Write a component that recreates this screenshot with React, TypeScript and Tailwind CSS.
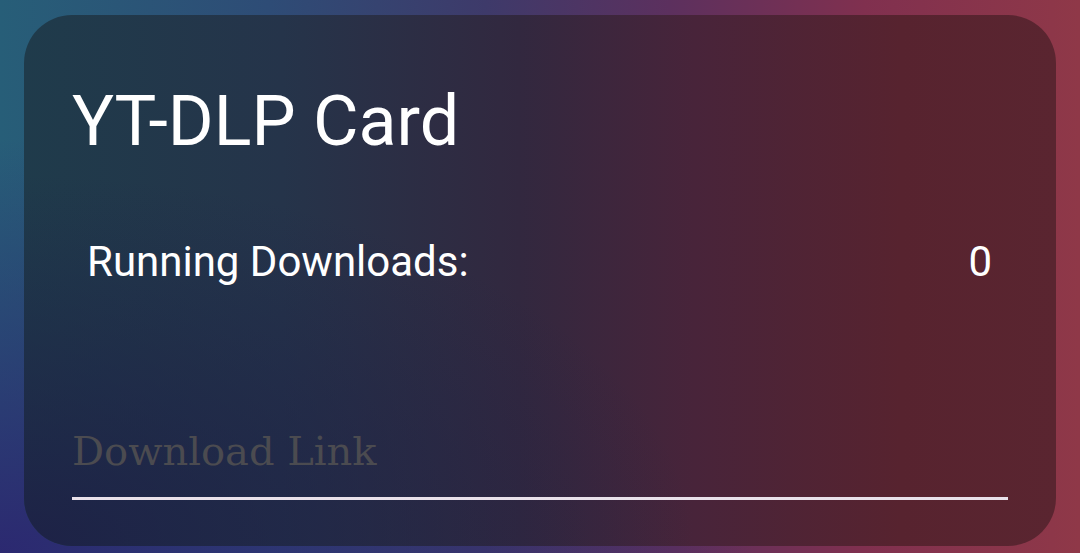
import React from "react";

export default function App() {
  return (
    <div className="w-[1080px] h-[553px] overflow-hidden relative bg-[linear-gradient(90deg,#275e78_0%,#2e4c76_25%,#3e3a6a_45%,#5c305e_62%,#80304f_80%,#8f3848_100%)]">
      <div className="absolute inset-0 bg-[radial-gradient(ellipse_70%_75%_at_0%_100%,rgba(44,38,112,0.95)_0%,rgba(44,38,112,0)_100%)]" />
      <div className="relative pt-[15px] pl-[24px] pr-[24px]">
        <div className="relative h-[531px] rounded-[48px] overflow-hidden bg-[linear-gradient(90deg,#1f3b4b_0%,#25344a_25%,#32283f_48%,#48243a_65%,#57232f_85%,#5a2530_100%)] pl-[48px] pr-[48px]">
          <div className="absolute inset-0 bg-[radial-gradient(ellipse_65%_70%_at_0%_100%,rgba(29,31,70,0.9)_0%,rgba(29,31,70,0)_100%)]" />
          <div className="relative flex flex-col" style={{ fontFamily: "Roboto, sans-serif" }}>
            <div className="mt-[71px] text-[70px] leading-none text-white">YT-DLP Card</div>
            <div className="mt-[85px] flex items-start justify-between pl-[15px] pr-[16px] text-[42px] leading-none text-white">
              <span>Running Downloads:</span>
              <span>0</span>
            </div>
            <div className="mt-[148px] border-b-[3px] border-[#e9e1ea] pb-[26px]">
              <div
                className="text-[40px] leading-none text-[#4b4b50]"
                style={{ fontFamily: "'DejaVu Serif', serif" }}
              >
                Download Link
              </div>
            </div>
          </div>
        </div>
      </div>
    </div>
  );
}
